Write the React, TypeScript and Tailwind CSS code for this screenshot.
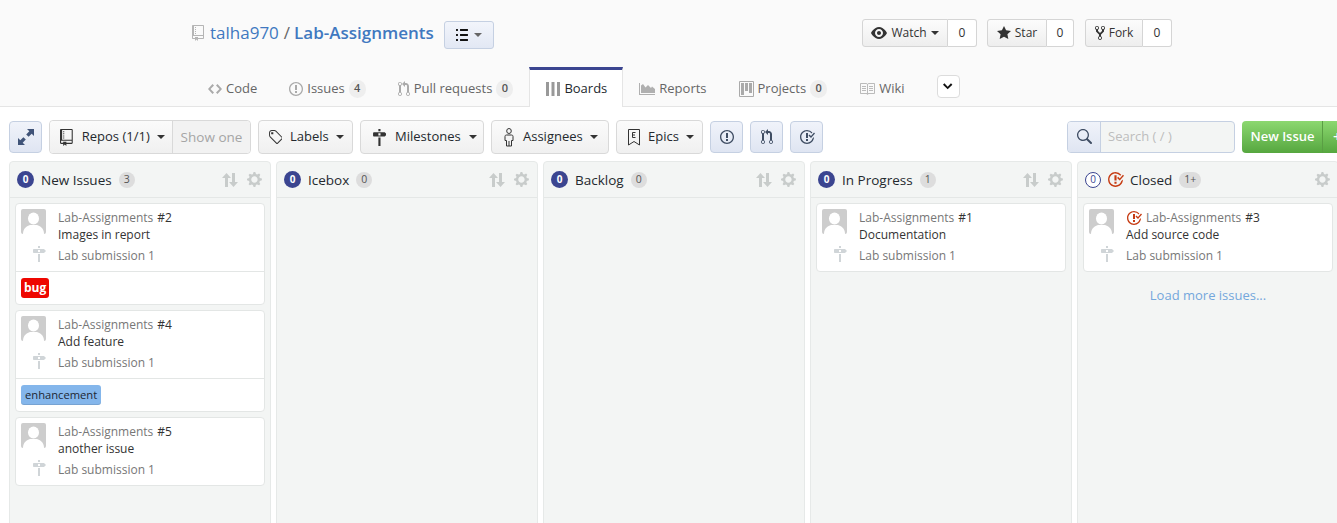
import React from "react";

const P = {
  repo: ["0 0 12 16", "M4 9H3V8h1v1zm0-3H3v1h1V6zm0-2H3v1h1V4zm0-2H3v1h1V2zm8-1v12c0 .55-.45 1-1 1H6v2l-1.5-1.5L3 16v-2H1c-.55 0-1-.45-1-1V1c0-.55.45-1 1-1h10c.55 0 1 .45 1 1zm-1 10H1v2h2v-1h3v1h5v-2zm0-10H2v9h9V1z"],
  list: ["0 0 12 16", "M2 13c0 .59 0 1-.59 1H.59C0 14 0 13.59 0 13c0-.59 0-1 .59-1h.81c.59 0 .59.41.59 1H2zm2.59-9h6.81c.59 0 .59-.41.59-1 0-.59 0-1-.59-1H4.59C4 2 4 2.41 4 3c0 .59 0 1 .59 1zM1.41 7H.59C0 7 0 7.41 0 8c0 .59 0 1 .59 1h.81c.59 0 .59-.41.59-1 0-.59 0-1-.59-1h.01zm0-5H.59C0 2 0 2.41 0 3c0 .59 0 1 .59 1h.81c.59 0 .59-.41.59-1 0-.59 0-1-.59-1h.01zm10 5H4.59C4 7 4 7.41 4 8c0 .59 0 1 .59 1h6.81c.59 0 .59-.41.59-1 0-.59 0-1-.59-1h.01zm0 5H4.59C4 12 4 12.41 4 13c0 .59 0 1 .59 1h6.81c.59 0 .59-.41.59-1 0-.59 0-1-.59-1h.01z"],
  eye: ["0 0 16 16", "M8.06 2C3 2 0 8 0 8s3 6 8.06 6C13 14 16 8 16 8s-3-6-7.94-6zM8 12c-2.2 0-4-1.78-4-4 0-2.2 1.8-4 4-4 2.22 0 4 1.8 4 4 0 2.22-1.78 4-4 4zm2-4c0 1.11-.89 2-2 2-1.11 0-2-.89-2-2 0-1.11.89-2 2-2 1.11 0 2 .89 2 2z"],
  star: ["0 0 14 16", "M14 6l-4.9-.64L7 1 4.9 5.36 0 6l3.6 3.26L2.67 14 7 11.67 11.33 14l-.93-4.74L14 6z"],
  fork: ["0 0 10 16", "M8 1a1.993 1.993 0 0 0-1 3.72V6L5 8 3 6V4.72A1.993 1.993 0 0 0 2 1a1.993 1.993 0 0 0-1 3.72V6.5l3 3v1.78A1.993 1.993 0 0 0 5 15a1.993 1.993 0 0 0 1-3.72V9.5l3-3V4.72A1.993 1.993 0 0 0 8 1zM2 4.2C1.34 4.2.8 3.65.8 3c0-.65.55-1.2 1.2-1.2.65 0 1.2.55 1.2 1.2 0 .65-.55 1.2-1.2 1.2zm3 10c-.66 0-1.2-.55-1.2-1.2 0-.65.55-1.2 1.2-1.2.65 0 1.2.55 1.2 1.2 0 .65-.55 1.2-1.2 1.2zm3-10c-.66 0-1.2-.55-1.2-1.2 0-.65.55-1.2 1.2-1.2.65 0 1.2.55 1.2 1.2 0 .65-.55 1.2-1.2 1.2z"],
  code: ["0 0 14 16", "M9.5 3L8 4.5 11.5 8 8 11.5 9.5 13 14 8 9.5 3zm-5 0L0 8l4.5 5L6 11.5 2.5 8 6 4.5 4.5 3z"],
  issue: ["0 0 14 16", "M7 2.3c3.14 0 5.7 2.56 5.7 5.7s-2.56 5.7-5.7 5.7A5.71 5.71 0 0 1 1.3 8c0-3.14 2.56-5.7 5.7-5.7zM7 1C3.14 1 0 4.14 0 8s3.14 7 7 7 7-3.14 7-7-3.14-7-7-7zm1 3H6v5h2V4zm0 6H6v2h2v-2z"],
  pr: ["0 0 12 16", "M11 11.28V5c-.03-.78-.34-1.47-.94-2.06C9.46 2.35 8.78 2.03 8 2H7V0L4 3l3 3V4h1c.27.02.48.11.69.31.21.2.3.42.31.69v6.28A1.993 1.993 0 0 0 10 15a1.993 1.993 0 0 0 1-3.72zm-1 2.92c-.66 0-1.2-.55-1.2-1.2 0-.65.55-1.2 1.2-1.2.65 0 1.2.55 1.2 1.2 0 .65-.55 1.2-1.2 1.2zM4 3c0-1.11-.89-2-2-2a1.993 1.993 0 0 0-1 3.72v6.56A1.993 1.993 0 0 0 2 15a1.993 1.993 0 0 0 1-3.72V4.72c.59-.34 1-.98 1-1.72zm-.8 10c0 .66-.55 1.2-1.2 1.2-.65 0-1.2-.55-1.2-1.2 0-.65.55-1.2 1.2-1.2.65 0 1.2.55 1.2 1.2zM2 4.2C1.34 4.2.8 3.65.8 3c0-.65.55-1.2 1.2-1.2.65 0 1.2.55 1.2 1.2 0 .65-.55 1.2-1.2 1.2z"],
  project: ["0 0 15 16", "M10 12h3V2h-3v10zm-4-2h3V2H6v8zm-4 4h3V2H2v12zm-1 1h13V1H1v14zM14 0H1a1 1 0 0 0-1 1v14a1 1 0 0 0 1 1h13a1 1 0 0 0 1-1V1a1 1 0 0 0-1-1z"],
  book: ["0 0 16 16", "M3 5h4v1H3V5zm0 3h4V7H3v1zm0 2h4V9H3v1zm11-5h-4v1h4V5zm0 2h-4v1h4V7zm0 2h-4v1h4V9zm2-6v9c0 .55-.45 1-1 1H9.5l-1 1-1-1H2c-.55 0-1-.45-1-1V3c0-.55.45-1 1-1h5.5l1 1 1-1H15c.55 0 1 .45 1 1zm-8 .5L7.5 3H2v9h6V3.5zm7-.5H9.5l-.5.5V12h6V3z"],
  tag: ["0 0 14 16", "M7.73 1.73C7.26 1.26 6.62 1 5.96 1H3.5C2.13 1 1 2.13 1 3.5v2.47c0 .66.27 1.3.73 1.77l6.06 6.06c.39.39 1.02.39 1.41 0l4.59-4.59a.996.996 0 0 0 0-1.41L7.73 1.73zM2.38 7.09c-.31-.3-.47-.7-.47-1.13V3.5c0-.88.72-1.59 1.59-1.59h2.47c.42 0 .83.16 1.13.47l6.14 6.13-4.73 4.73-6.13-6.15zM3.01 3h2v2H3V3h.01z"],
  milestone: ["0 0 14 16", "M8 2H6V0h2v2zm4 5H2c-.55 0-1-.45-1-1V4c0-.55.45-1 1-1h10l2 2-2 2zM8 4H6v2h2V4zM6 16h2V8H6v8z"],
  closed: ["0 0 16 16", "M7 10h2v2H7v-2zm2-6H7v5h2V4zm1.5 1.5l-1 1L12 9l4-4.5-1-1L12 7l-1.5-1.5zM8 13.7A5.71 5.71 0 0 1 2.3 8c0-3.14 2.56-5.7 5.7-5.7 1.83 0 3.45.88 4.5 2.2l.92-.92A6.947 6.947 0 0 0 8 1C4.14 1 1 4.14 1 8s3.14 7 7 7 7-3.14 7-7l-1.52 1.52c-.66 2.41-2.86 4.18-5.48 4.18z"],
  search: ["0 0 16 16", "M15.7 13.3l-3.81-3.83A5.93 5.93 0 0 0 13 6c0-3.31-2.69-6-6-6S1 2.69 1 6s2.69 6 6 6c1.3 0 2.48-.41 3.47-1.11l3.83 3.81c.19.2.45.3.7.3.25 0 .52-.09.7-.3a.996.996 0 0 0 0-1.41v.01zM7 10.7c-2.59 0-4.7-2.11-4.7-4.7 0-2.59 2.11-4.7 4.7-4.7 2.59 0 4.7 2.11 4.7 4.7 0 2.59-2.11 4.7-4.7 4.7z"],
  gear: ["0 0 14 16", "M14 8.77v-1.6l-1.94-.64-.45-1.09.88-1.84-1.13-1.13-1.81.91-1.09-.45-.69-1.92h-1.6l-.63 1.94-1.11.45-1.84-.88-1.13 1.13.91 1.81-.45 1.09L0 7.23v1.59l1.94.64.45 1.09-.88 1.84 1.13 1.13 1.81-.91 1.09.45.69 1.92h1.59l.63-1.94 1.11-.45 1.84.88 1.13-1.13-.92-1.81.47-1.09L14 8.75v.02zM7 11c-1.66 0-3-1.34-3-3s1.34-3 3-3 3 1.34 3 3-1.34 3-3 3z"],
  chevron: ["0 0 10 16", "M5 11L0 6l1.5-1.5L5 8.25 8.5 4.5 10 6l-5 5z"],
} as const;

function Oct({ n, h = 16, c = "text-[#333]", className = "" }: { n: keyof typeof P; h?: number; c?: string; className?: string }) {
  const [vb, d] = P[n];
  const [, , w, hh] = vb.split(" ").map(Number);
  return (
    <svg viewBox={vb} width={(w * h) / hh} height={h} fill="currentColor" className={`shrink-0 ${c} ${className}`}>
      <path fillRule="evenodd" d={d} />
    </svg>
  );
}

function Caret({ c = "border-t-[#333]" }: { c?: string }) {
  return <span className={`inline-block w-0 h-0 border-x-[4px] border-x-transparent border-t-[4px] ${c}`} />;
}

function Tab({ icon, label, count, active }: { icon: React.ReactNode; label: string; count?: string; active?: boolean }) {
  return active ? (
    <div className="h-[40px] pl-[16px] pr-[15px] flex items-center gap-[4px] bg-white border-x border-[#e5e5e5] border-t-[3px] border-t-[#3b4590] text-[#24292e]">
      {icon}
      <span>{label}</span>
    </div>
  ) : (
    <div className="h-[40px] px-[16px] flex items-center gap-[4px] text-[#666] pt-[3px]">
      {icon}
      <span>{label}</span>
      {count && <span className="h-[18px] w-[17px] rounded-full bg-[#eeeeee] text-[11px] font-semibold text-[#555] flex items-center justify-center">{count}</span>}
    </div>
  );
}

function Social({ icon, label, caret, count, w, cw }: { icon: React.ReactNode; label: string; caret?: boolean; count: string; w: string; cw: string }) {
  return (
    <div className="flex h-[28px] text-[12px]">
      <div className={`flex items-center justify-center gap-[4px] rounded-l-[3px] border border-[#d5d5d5] bg-gradient-to-b from-[#fcfcfc] to-[#eeeeee] text-[#333] font-medium ${w}`}>
        {icon}
        <span>{label}</span>
        {caret && <Caret />}
      </div>
      <div className={`${cw} flex items-center justify-center rounded-r-[3px] border border-l-0 border-[#d5d5d5] bg-white text-[#333]`}>{count}</div>
    </div>
  );
}

function Filter({ icon, label, w, pl, box, gap }: { icon: React.ReactNode; label: string; w: string; pl: string; box: string; gap: string }) {
  return (
    <div className={`h-[34px] ${w} ${pl} ${gap} flex items-center rounded-[4px] border border-[#d9d9d9] bg-gradient-to-b from-[#fbfbfb] to-[#f0f0f0] text-[#24292e] text-[13px] font-medium pt-[1px]`}>
      <span className={`${box} flex justify-center shrink-0`}>{icon}</span>
      <span>{label}</span>
      <Caret />
    </div>
  );
}

function BlueBtn({ children, w = "w-[33px]" }: { children: React.ReactNode; w?: string }) {
  return (
    <div className={`h-[32px] ${w} flex items-center justify-center rounded-[4px] border border-[#c5d0e2] bg-gradient-to-b from-[#f0f3fa] to-[#dfe5f2]`}>
      {children}
    </div>
  );
}

function PersonOutline() {
  return (
    <svg width="10" height="19" viewBox="0 0 10 19" fill="none" stroke="#333" strokeWidth="1">
      <ellipse cx="5" cy="3" rx="2.3" ry="2.5" />
      <path d="M1 12.5V8.5C1 7.5 1.6 7 2.5 7h5C8.4 7 9 7.5 9 8.5v4H7.5V18h-5v-5.5z" />
      <path d="M5 13v5" />
    </svg>
  );
}

function EpicIcon() {
  return (
    <svg width="12" height="17" viewBox="0 0 12 17" fill="none" stroke="#333" strokeWidth="1">
      <path d="M.5.5h11v15.5L6 12.5.5 16z" />
      <path d="M7.5 3.5H4.5v5h3M4.5 6H7" />
    </svg>
  );
}

function ExpandIcon() {
  return (
    <svg width="16" height="16" viewBox="0 0 16 16" fill="#3f5378">
      <path d="M9 0H16v7l-2.3-2.3-3.1 3.1-2.4-2.4 3.1-3.1z" />
      <path d="M7 16H0V9l2.3 2.3 3.1-3.1 2.4 2.4-3.1 3.1z" />
    </svg>
  );
}

function ReportsIcon() {
  return (
    <svg width="16" height="16" viewBox="0 0 16 16" fill="#b0b0b0">
      <path d="M0 2h1v11h15v1H0z" />
      <path d="M2 12V4.5L4 3l2.5 3.5L9 4l3 3 1-1.5 3 2.5v4z" />
    </svg>
  );
}

function BoardsIcon() {
  return (
    <svg width="14" height="16" viewBox="0 0 14 16" fill="#999">
      <rect x="0" y="1" width="3" height="14" />
      <rect x="5.5" y="1" width="3" height="14" />
      <rect x="11" y="1" width="3" height="14" />
    </svg>
  );
}

function SortIcon() {
  return (
    <svg width="16" height="16" viewBox="0 0 16 16" fill="#c8cccb">
      <path d="M4.5 1L9 6H6v9H3V6H0z" />
      <path d="M11.5 15L7 10h3V1h3v9h3z" />
    </svg>
  );
}

function Avatar() {
  return (
    <svg width="25" height="25" viewBox="0 0 25 25" className="shrink-0 rounded-[2px]">
      <rect width="25" height="25" fill="#cdcdcd" />
      <ellipse cx="12.5" cy="9.5" rx="5.5" ry="6" fill="#fff" />
      <path d="M2 25c0-6 4-8 7-9h7c3 1 7 3 7 9z" fill="#fff" />
    </svg>
  );
}

type CardT = { num: string; title: string; label?: "bug" | "enhancement"; closed?: boolean };

function Card({ num, title, label, closed }: CardT) {
  return (
    <div className="w-[250px] rounded-[4px] border border-[#e3e6e5] bg-white">
      <div className="h-[67px] flex pl-[5px] pt-[5px]">
        <div className="w-[25px] flex flex-col items-center">
          <Avatar />
          <div className="mt-[12px] ml-[10px]">
            <Oct n="milestone" h={16} c="text-[#d0d5d8]" />
          </div>
        </div>
        <div className="ml-[12px] text-[12px] leading-[17px]">
          <div className="flex items-center text-[#777]">
            {closed && <Oct n="closed" h={16} c="text-[#c63b12]" className="mr-[4px]" />}
            <span>Lab-Assignments</span>
            <span className="ml-[4px] text-[#333]">#{num}</span>
          </div>
          <div className="text-[#333]">{title}</div>
          <div className="mt-[4px] text-[#777]">Lab submission 1</div>
        </div>
      </div>
      {label && (
        <div className="h-[33px] border-t border-[#e3e6e5] flex items-center pl-[5px]">
          {label === "bug" ? (
            <span className="h-[20px] px-[3px] rounded-[3px] bg-[#ee0701] text-white text-[12px] font-bold flex items-center">bug</span>
          ) : (
            <span className="h-[20px] px-[4px] rounded-[3px] bg-[#84b6eb] text-[#1c2733] text-[11.2px] font-medium flex items-center shadow-[inset_0_-1px_0_rgba(27,31,35,0.12)]">enhancement</span>
          )}
        </div>
      )}
    </div>
  );
}

function Column({ title, count, cards, closed, more }: { title: string; count: string; cards: CardT[]; closed?: boolean; more?: boolean }) {
  return (
    <div className="w-[262px] shrink-0 h-[400px] rounded-t-[4px] border border-[#e6e9e8] bg-[#f3f5f4]">
      <div className="h-[36px] flex items-center pl-[7px] pr-[8px] border-b border-[#e4e7e6]">
        {closed ? (
          <span className="w-[16px] h-[16px] rounded-full border border-[#3b4590] bg-white text-[#3b4590] text-[10px] flex items-center justify-center">0</span>
        ) : (
          <span className="w-[17px] h-[17px] rounded-full bg-[#3b4590] text-white text-[10px] font-bold flex items-center justify-center">0</span>
        )}
        {closed && <Oct n="closed" h={17} c="text-[#c63b12]" className="ml-[6px]" />}
        <span className={`${closed ? "ml-[6px]" : "ml-[7px]"} mt-[1px] text-[13.5px] font-medium text-[#24292e]`}>{title}</span>
        <span className="ml-[7px] h-[16px] min-w-[16px] px-[5px] rounded-full bg-[#dddddd] text-[#555] text-[10.5px] flex items-center justify-center">{count}</span>
        <span className="ml-auto flex items-center gap-[9px]">
          {!closed && <SortIcon />}
          <Oct n="gear" h={17} c="text-[#c8cccb]" />
        </span>
      </div>
      <div className="px-[5px] pt-[5px] flex flex-col gap-[5px]">
        {cards.map((c) => <Card key={c.num} {...c} />)}
        {more && <div className="mt-[9px] text-center text-[13px] text-[#74a7dc]">Load more issues...</div>}
      </div>
    </div>
  );
}

export default function App() {
  return (
    <div className="w-[1337px] h-[523px] overflow-hidden bg-white text-[13px] font-['Open_Sans',sans-serif]">
      <header className="h-[107px] bg-[#fafafa] border-b border-[#e5e5e5]">
        <div className="h-[67px] flex items-start pl-[192px] pr-[165px]">
          <div className="mt-[23px] flex items-center text-[#4078c0] text-[17px] leading-[20px]">
            <Oct n="repo" h={16} c="text-[#b5b5b5]" />
            <span className="ml-[6px]">talha970</span>
            <span className="ml-[5px] mr-[4px] text-[#666]">/</span>
            <span className="font-semibold">Lab-Assignments</span>
          </div>
          <div className="ml-[10px] mt-[21px] w-[50px] h-[28px] flex items-center justify-center gap-[6px] rounded-[3px] border border-[#c5d0e2] bg-gradient-to-b from-[#f2f5fb] to-[#e2e8f4]">
            <Oct n="list" h={16} c="text-[#111]" />
            <Caret c="border-t-[#666]" />
          </div>
          <div className="ml-auto mt-[19px] flex">
            <Social w="w-[86px]" cw="w-[29px]" icon={<Oct n="eye" h={16} />} label="Watch" caret count="0" />
            <div className="ml-[10px]"><Social w="w-[60px]" cw="w-[27px]" icon={<Oct n="star" h={16} />} label="Star" count="0" /></div>
            <div className="ml-[11px]"><Social w="w-[58px]" cw="w-[29px]" icon={<Oct n="fork" h={16} />} label="Fork" count="0" /></div>
          </div>
        </div>
        <nav className="h-[40px] flex items-start pl-[192px]">
          <Tab icon={<Oct n="code" h={16} c="text-[#aaa]" />} label="Code" />
          <Tab icon={<Oct n="issue" h={16} c="text-[#aaa]" />} label="Issues" count="4" />
          <Tab icon={<Oct n="pr" h={16} c="text-[#aaa]" />} label="Pull requests" count="0" />
          <Tab active icon={<BoardsIcon />} label="Boards" />
          <Tab icon={<ReportsIcon />} label="Reports" />
          <Tab icon={<Oct n="project" h={16} c="text-[#aaa]" />} label="Projects" count="0" />
          <Tab icon={<Oct n="book" h={16} c="text-[#bbb]" />} label="Wiki" />
          <div className="ml-[16px] mt-[8px] w-[23px] h-[23px] flex items-center justify-center rounded-[4px] border border-[#dcdcdc] bg-white">
            <Oct n="chevron" h={15} c="text-[#111]" />
          </div>
        </nav>
      </header>

      <div className="h-[54px] flex items-center gap-[7px] pl-[9px] pt-[5px]">
        <BlueBtn><ExpandIcon /></BlueBtn>
        <div className="h-[34px] w-[202px] flex rounded-[4px] border border-[#d9d9d9] text-[13px] font-medium">
          <div className="w-[122px] flex items-center pl-[10px] pt-[1px] bg-gradient-to-b from-[#fbfbfb] to-[#f0f0f0] text-[#24292e] rounded-l-[4px]">
            <Oct n="repo" h={17} />
            <span className="ml-[9px] mr-[7px]">Repos (1/1)</span>
            <Caret />
          </div>
          <div className="flex-1 flex items-center justify-center pt-[1px] border-l border-[#d9d9d9] bg-[#f2f2f2] text-[#a5a5a5] text-[13.5px] rounded-r-[4px]">Show one</div>
        </div>
        <Filter w="w-[95px]" pl="pl-[8px]" box="w-[16px]" gap="gap-[7px]" icon={<Oct n="tag" h={17} />} label="Labels" />
        <Filter w="w-[124px]" pl="pl-[10px]" box="w-[16px]" gap="gap-[8px]" icon={<Oct n="milestone" h={17} />} label="Milestones" />
        <Filter w="w-[118px]" pl="pl-[10px]" box="w-[14px]" gap="gap-[7px]" icon={<PersonOutline />} label="Assignees" />
        <Filter w="w-[87px]" pl="pl-[10px]" box="w-[14px]" gap="gap-[7px]" icon={<EpicIcon />} label="Epics" />
        <BlueBtn><Oct n="issue" h={16} c="text-[#3f4d63]" /></BlueBtn>
        <BlueBtn><Oct n="pr" h={16} c="text-[#3f4d63]" /></BlueBtn>
        <BlueBtn><Oct n="closed" h={16} c="text-[#3f4d63]" /></BlueBtn>
        <div className="ml-auto h-[32px] w-[168px] flex rounded-[4px] border border-[#c5d0e2] bg-[#f3f5f4] overflow-hidden">
          <div className="w-[33px] flex items-center justify-center border-r border-[#c5d0e2] bg-gradient-to-b from-[#f0f3fa] to-[#dfe5f2]">
            <Oct n="search" h={16} c="text-[#3f4d63]" />
          </div>
          <div className="pl-[7px] pt-[1px] flex items-center text-[#bdbdbd] text-[13px]">Search ( / )</div>
        </div>
        <div className="shrink-0 h-[32px] w-[110px] -mr-[15px] flex rounded-l-[4px] bg-gradient-to-b from-[#8cd870] to-[#56a73f] text-white text-[13px] font-semibold">
          <div className="w-[81px] pl-[1px] pt-[1px] flex items-center justify-center border-r border-[#5a9e44]">New Issue</div>
          <div className="flex-1 flex items-center pl-[10px] text-[15px]">+</div>
        </div>
      </div>

      <main className="flex gap-[5px] pl-[9px] overflow-hidden">
        <Column title="New Issues" count="3" cards={[
          { num: "2", title: "Images in report", label: "bug" },
          { num: "4", title: "Add feature", label: "enhancement" },
          { num: "5", title: "another issue" },
        ]} />
        <Column title="Icebox" count="0" cards={[]} />
        <Column title="Backlog" count="0" cards={[]} />
        <Column title="In Progress" count="1" cards={[{ num: "1", title: "Documentation" }]} />
        <Column title="Closed" count="1+" closed more cards={[{ num: "3", title: "Add source code", closed: true }]} />
      </main>
    </div>
  );
}
